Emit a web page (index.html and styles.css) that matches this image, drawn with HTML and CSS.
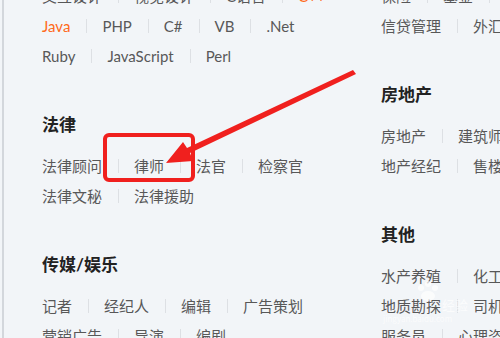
FILE: index.html
```html
<!DOCTYPE html>
<html lang="zh-CN">
<head>
    <meta charset="UTF-8">
    <title>职位分类</title>
    <link rel="stylesheet" href="styles.css">
</head>
<body>
    <div class="page">
        <div class="col col-left">
            <div class="section">
                <h3>IT/互联网</h3>
                <ul class="row">
                    <li>交互设计</li><li>视觉设计</li><li>C语言</li><li class="hot">C++</li>
                </ul>
                <ul class="row">
                    <li class="hot">Java</li><li>PHP</li><li>C#</li><li>VB</li><li>.Net</li>
                </ul>
                <ul class="row">
                    <li>Ruby</li><li>JavaScript</li><li>Perl</li>
                </ul>
            </div>
            <div class="section">
                <h3>法律</h3>
                <ul class="row">
                    <li>法律顾问</li><li>律师</li><li>法官</li><li>检察官</li>
                </ul>
                <ul class="row">
                    <li>法律文秘</li><li>法律援助</li>
                </ul>
            </div>
            <div class="section">
                <h3>传媒/娱乐</h3>
                <ul class="row">
                    <li>记者</li><li>经纪人</li><li>编辑</li><li>广告策划</li>
                </ul>
                <ul class="row">
                    <li>营销广告</li><li>导演</li><li>编剧</li>
                </ul>
            </div>
        </div>
        <div class="col col-right">
            <div class="section">
                <h3>金融</h3>
                <ul class="row">
                    <li>保险</li><li>基金</li><li>证券</li>
                </ul>
                <ul class="row">
                    <li>信贷管理</li><li>外汇管理</li>
                </ul>
            </div>
            <div class="section">
                <h3>房地产</h3>
                <ul class="row">
                    <li>房地产</li><li>建筑师</li>
                </ul>
                <ul class="row">
                    <li>地产经纪</li><li>售楼</li>
                </ul>
            </div>
            <div class="section">
                <h3>其他</h3>
                <ul class="row">
                    <li>水产养殖</li><li>化工</li>
                </ul>
                <ul class="row">
                    <li>地质勘探</li><li>司机</li>
                </ul>
                <ul class="row">
                    <li>服务员</li><li>心理咨询</li>
                </ul>
            </div>
        </div>
    </div>

    <!-- annotation drawn over the screenshot -->
    <svg class="markup" width="500" height="338" viewBox="0 0 500 338">
        <rect x="105" y="135" width="88" height="45" rx="4" fill="none" stroke="#f0201e" stroke-width="4"/>
        <polygon points="353,70 356,74 190,153 193,161 166,163 183,142 187,148" fill="#f0201e"/>
        <g class="watermark">
            <circle cx="421" cy="288" r="3"/>
            <circle cx="428" cy="284" r="3"/>
            <circle cx="435" cy="288" r="3"/>
            <ellipse cx="428" cy="296" rx="7" ry="5"/>
            <text x="442" y="310" font-size="13">经验</text>
            <text x="383" y="322" font-size="8">jingyan.baidu.com</text>
        </g>
    </svg>
</body>
</html>
```

FILE: styles.css
```css
body {
    margin: 0;
    width: 500px;
    height: 338px;
    overflow: hidden;
    position: relative;
    background-color: #f2f5f8;
    font-family: Lato, "Noto Sans CJK SC", sans-serif;
}
.page {
    display: flex;
    align-items: flex-start;
    margin-top: -57px;
    margin-left: 2px;
    padding-left: 38px;
    border-left: 2px solid #d3d7dc;
    min-height: 420px;
}
.col-left {
    flex: none;
    width: 339px;
}
.col-right {
    flex: none;
    width: 320px;
}
.section {
    margin-bottom: 42px;
}
h3 {
    margin: 0 0 14px;
    height: 24px;
    line-height: 24px;
    font-size: 17px;
    font-weight: bold;
    color: #222;
}
.row {
    display: flex;
    align-items: center;
    margin: 0;
    padding: 0;
    list-style: none;
    height: 30px;
    white-space: nowrap;
}
.row li {
    display: flex;
    align-items: center;
    font-size: 15px;
    line-height: 30px;
    color: #585858;
}
.row li + li::before {
    content: "";
    display: inline-block;
    width: 1px;
    height: 14px;
    margin: 0 15px 0 16px;
    background-color: #dde0e4;
}
.row li.hot {
    color: #ff6a1a;
}
.markup {
    position: absolute;
    top: 0;
    left: 0;
    pointer-events: none;
}
.watermark {
    fill: #ffffff;
    opacity: 0.7;
    font-family: "Noto Sans CJK SC", sans-serif;
}
```
